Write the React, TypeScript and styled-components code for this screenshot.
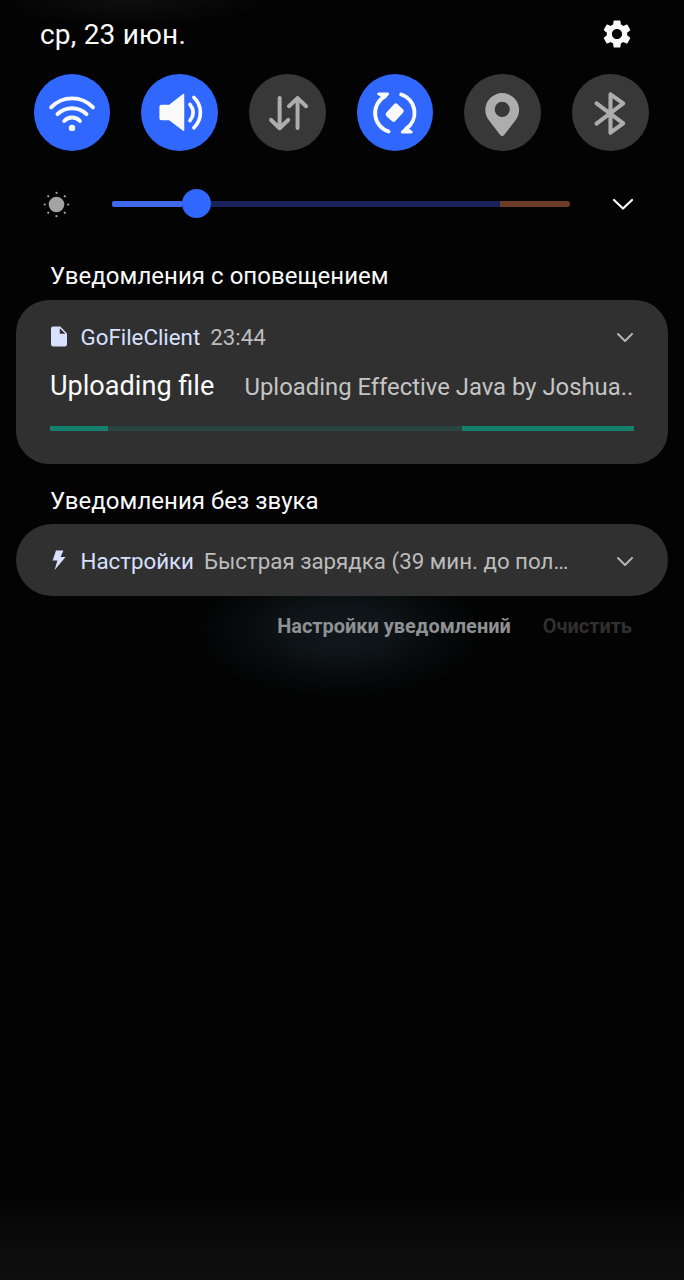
import React from "react";
import styled, { createGlobalStyle } from "styled-components";
import { MdSettings } from "react-icons/md";

const GlobalStyle = createGlobalStyle`
  * { box-sizing: border-box; }
  body { margin: 0; background: #030303; }
`;

const Shade = styled.main`
  display: flex;
  flex-direction: column;
  width: 684px;
  height: 1280px;
  overflow: hidden;
  color: #fafafa;
  font-family: Roboto, "Noto Sans", sans-serif;
  background:
    radial-gradient(ellipse 130px 26px at 130px 0, #0f0f0f, transparent),
    radial-gradient(ellipse 142px 68px at 340px 630px, #10171b 0%, #0e1417 35%, #070a0b 70%, transparent 100%),
    linear-gradient(to bottom, transparent 1190px, #0b0b0b 1245px, #0e0e0e 1280px),
    #030303;
`;

const Header = styled.header`
  display: flex;
  align-items: center;
  justify-content: space-between;
  height: 74px;
  padding: 0 50px 6px 40px;
`;

const DateText = styled.time`
  padding-top: 2px;
  font-size: 28px;
  line-height: 36px;
  letter-spacing: 0.2px;
`;

const IconButton = styled.button`
  display: flex;
  align-items: center;
  justify-content: center;
  flex: none;
  padding: 0;
  border: 0;
  background: none;
  color: inherit;
`;

const Toggles = styled.div`
  display: flex;
  justify-content: space-between;
  padding: 0 35.4px 0 33.6px;
`;

const Toggle = styled(IconButton)<{ $on?: boolean }>`
  width: 76.6px;
  height: 77px;
  border-radius: 50%;
  background: ${(p) => (p.$on ? "#2f67ff" : "#383838")};
  color: ${(p) => (p.$on ? "#fafafa" : "#adadad")};
`;

const Brightness = styled.div`
  display: flex;
  align-items: center;
  height: 105px;
  padding: 0 50px 0 43px;

  > :first-child,
  > :last-child {
    margin-top: 2px;
  }
`;

const Track = styled.div`
  display: flex;
  align-items: center;
  width: 458px;
  margin: 0 42.5px 0 41.5px;
`;

const Segment = styled.span<{ $width: number; $color: string; $ends?: string }>`
  width: ${(p) => p.$width}px;
  height: 6px;
  background: ${(p) => p.$color};
  border-radius: ${(p) => p.$ends ?? "0"};
`;

const ProgressSegment = styled(Segment)`
  height: 5.5px;
`;

const Knob = styled.span`
  width: 29px;
  height: 29px;
  border-radius: 50%;
  background: #2f67ff;
`;

const SectionTitle = styled.h2<{ $space: string }>`
  margin: ${(p) => p.$space};
  padding-left: 50px;
  font-size: 24px;
  font-weight: 400;
  line-height: 30px;
  letter-spacing: 0.04px;
`;

const Card = styled.article<{ $height: number; $radius: number }>`
  height: ${(p) => p.$height}px;
  margin: 0 16.5px 0 16px;
  padding: 21px 34px 0;
  border-radius: ${(p) => p.$radius}px;
  background: #303030;
`;

const CardHeader = styled.div`
  display: flex;
  align-items: center;
  height: 32px;
  font-size: 22.3px;
  line-height: 32px;
`;

const AppIcon = styled.span`
  display: flex;
  width: 30.5px;
`;

const AppName = styled.span`
  margin-right: 10px;
  color: #d8e0ff;
`;

const Muted = styled.span`
  flex: 1;
  color: #bcbcbc;
`;

const Message = styled.div`
  display: flex;
  align-items: baseline;
  margin-top: 16px;
  height: 34px;
  line-height: 34px;
  white-space: nowrap;
`;

const MessageTitle = styled.strong`
  width: 194.5px;
  font-size: 27.1px;
  font-weight: 400;
`;

const MessageText = styled.span`
  font-size: 23.85px;
  color: #c4c4c4;
`;

const Progress = styled.div`
  display: flex;
  margin-top: 22.5px;
`;

const Footer = styled.footer`
  display: flex;
  justify-content: flex-end;
  gap: 32px;
  margin-top: 16px;
  padding-right: 52px;
`;

const FooterButton = styled.button<{ $color: string }>`
  padding: 0;
  border: 0;
  background: none;
  font: 700 19.95px/28px Roboto, "Noto Sans", sans-serif;
  color: ${(p) => p.$color};
`;

const Glyph = ({ children, width = 4 }: { children: React.ReactNode; width?: number }) => (
  <svg
    width="77"
    height="77"
    viewBox="0 0 77 77"
    fill="none"
    stroke="currentColor"
    strokeWidth={width}
    strokeLinecap="round"
    strokeLinejoin="round"
  >
    {children}
  </svg>
);

const Chevron = ({ w, h, color, stroke }: { w: number; h: number; color: string; stroke: number }) => (
  <svg width={w + 4} height={h + 4} fill="none" stroke={color} strokeWidth={stroke} strokeLinecap="round" strokeLinejoin="round">
    <path d={`M2 2 L${2 + w / 2} ${2 + h} L${2 + w} 2`} />
  </svg>
);

const Sun = () => (
  <svg width="27" height="27" viewBox="-13.5 -13.5 27 27" fill="#a3a3a3">
    <circle r="7.8" />
    {[0, 45, 90, 135, 180, 225, 270, 315].map((a) => (
      <circle key={a} cx="11.7" r="1.1" transform={`rotate(${a})`} />
    ))}
  </svg>
);

export default function App() {
  return (
    <>
      <GlobalStyle />
      <Shade>
        <Header>
          <DateText>ср, 23 июн.</DateText>
          <IconButton aria-label="Настройки">
            <MdSettings size={34} />
          </IconButton>
        </Header>

        <Toggles>
          <Toggle $on aria-label="Wi-Fi">
            <Glyph width={3.9}>
              <path d="M17.2 33.4A29 29 0 0 1 59.3 33.4" />
              <path d="M23.6 40.2A20.8 20.8 0 0 1 52.8 40.2" />
              <path d="M30.4 47A10.6 10.6 0 0 1 46.2 47" />
              <circle cx="38.2" cy="54" r="3.2" fill="currentColor" stroke="none" />
            </Glyph>
          </Toggle>
          <Toggle $on aria-label="Звук">
            <Glyph width={3.7}>
              <path
                d="M20.4 31.5H28.5L42.7 20.5V56.3L28.5 45.5H20.4Q19.3 45.5 19.3 44.4V32.6Q19.3 31.5 20.4 31.5Z"
                fill="currentColor"
                strokeWidth="1.6"
              />
              <path d="M49.2 30.3Q55.8 38.4 49.2 46.6" />
              <path d="M53.2 23.4A21 21 0 0 1 53.2 53.8" />
            </Glyph>
          </Toggle>
          <Toggle aria-label="Мобильные данные">
            <Glyph>
              <path d="M30.8 24V54M22.2 46L30.8 54.3L39.4 46" />
              <path d="M48.8 54V24M40.2 32.2L48.8 24L57.4 32.2" />
            </Glyph>
          </Toggle>
          <Toggle $on aria-label="Автоповорот">
            <Glyph width={3.9}>
              <path d="M27.4 22.6A19.4 19.4 0 0 0 31.8 57.6" />
              <path d="M44.4 20.4A19.4 19.4 0 0 1 49.2 55" />
              <path d="M21.6 19.7H30.8L27.8 23.2Z" fill="currentColor" strokeWidth="2.8" />
              <path d="M45.4 58.2H54.6L49.4 54.6Z" fill="currentColor" strokeWidth="2.8" />
              <rect x="29.7" y="32.5" width="16.4" height="12.4" rx="2.4" fill="currentColor" stroke="none" transform="rotate(-48 37.9 38.7)" />
            </Glyph>
          </Toggle>
          <Toggle aria-label="Местоположение">
            <Glyph>
              <path
                d="M38.4 19A17 17 0 0 0 21.4 36C21.4 40 22.8 43.3 25 46.3L36.4 61.2Q38.4 63.4 40.4 61.2L51.8 46.3C54 43.3 55.4 40 55.4 36A17 17 0 0 0 38.4 19ZM38.4 27.8A7.6 7.6 0 1 1 38.4 43A7.6 7.6 0 1 1 38.4 27.8Z"
                fill="currentColor"
                fillRule="evenodd"
                stroke="none"
              />
            </Glyph>
          </Toggle>
          <Toggle aria-label="Bluetooth">
            <Glyph width={4.1}>
              <path d="M24.7 29.4L51.5 49.4L38.7 58.8V20.2L51.5 29.4L24.7 49.6" />
            </Glyph>
          </Toggle>
        </Toggles>

        <Brightness>
          <Sun />
          <Track>
            <Segment $width={70} $color="#3f68ea" $ends="2px 0 0 2px" />
            <Knob />
            <Segment $width={289} $color="#17235a" />
            <Segment $width={70} $color="#6e3b29" $ends="0 3px 3px 0" />
          </Track>
          <IconButton aria-label="Развернуть">
            <Chevron w={18} h={8.5} color="#fafafa" stroke={2.2} />
          </IconButton>
        </Brightness>

        <SectionTitle $space="5px 0 9px">Уведомления с оповещением</SectionTitle>
        <Card $height={164} $radius={33}>
          <CardHeader>
            <AppIcon>
              <svg width="18" height="22" viewBox="0 0 18 22">
                <path d="M3 0.6H10.4L17 7.4V18.2Q17 20.4 14.8 20.4H3.2Q1 20.4 1 18.2V2.8Q1 0.6 3 0.6ZM9.8 2.2V7.8H15.4Z" fill="#d8e0ff" fillRule="evenodd" />
              </svg>
            </AppIcon>
            <AppName>GoFileClient</AppName>
            <Muted>23:44</Muted>
            <Chevron w={14} h={7} color="#b4b4b4" stroke={2} />
          </CardHeader>
          <Message>
            <MessageTitle>Uploading file</MessageTitle>
            <MessageText>Uploading Effective Java by Joshua..</MessageText>
          </Message>
          <Progress>
            <ProgressSegment $width={58} $color="#16806f" />
            <ProgressSegment $width={354} $color="#2a4440" />
            <ProgressSegment $width={172} $color="#16806f" />
          </Progress>
        </Card>

        <SectionTitle $space="22px 0 8.4px">Уведомления без звука</SectionTitle>
        <Card $height={71.6} $radius={36}>
          <CardHeader>
            <AppIcon>
              <svg width="18" height="22" viewBox="0 0 18 22">
                <path d="M6 0.5H13.4L10.6 7H15.6L4.6 20L7.4 10.6H2.6Z" fill="#d8e0ff" />
              </svg>
            </AppIcon>
            <AppName>Настройки</AppName>
            <Muted>Быстрая зарядка (39 мин. до пол…</Muted>
            <Chevron w={14} h={7} color="#b4b4b4" stroke={2} />
          </CardHeader>
        </Card>

        <Footer>
          <FooterButton $color="#8f9192">Настройки уведомлений</FooterButton>
          <FooterButton $color="#303030">Очистить</FooterButton>
        </Footer>
      </Shade>
    </>
  );
}
